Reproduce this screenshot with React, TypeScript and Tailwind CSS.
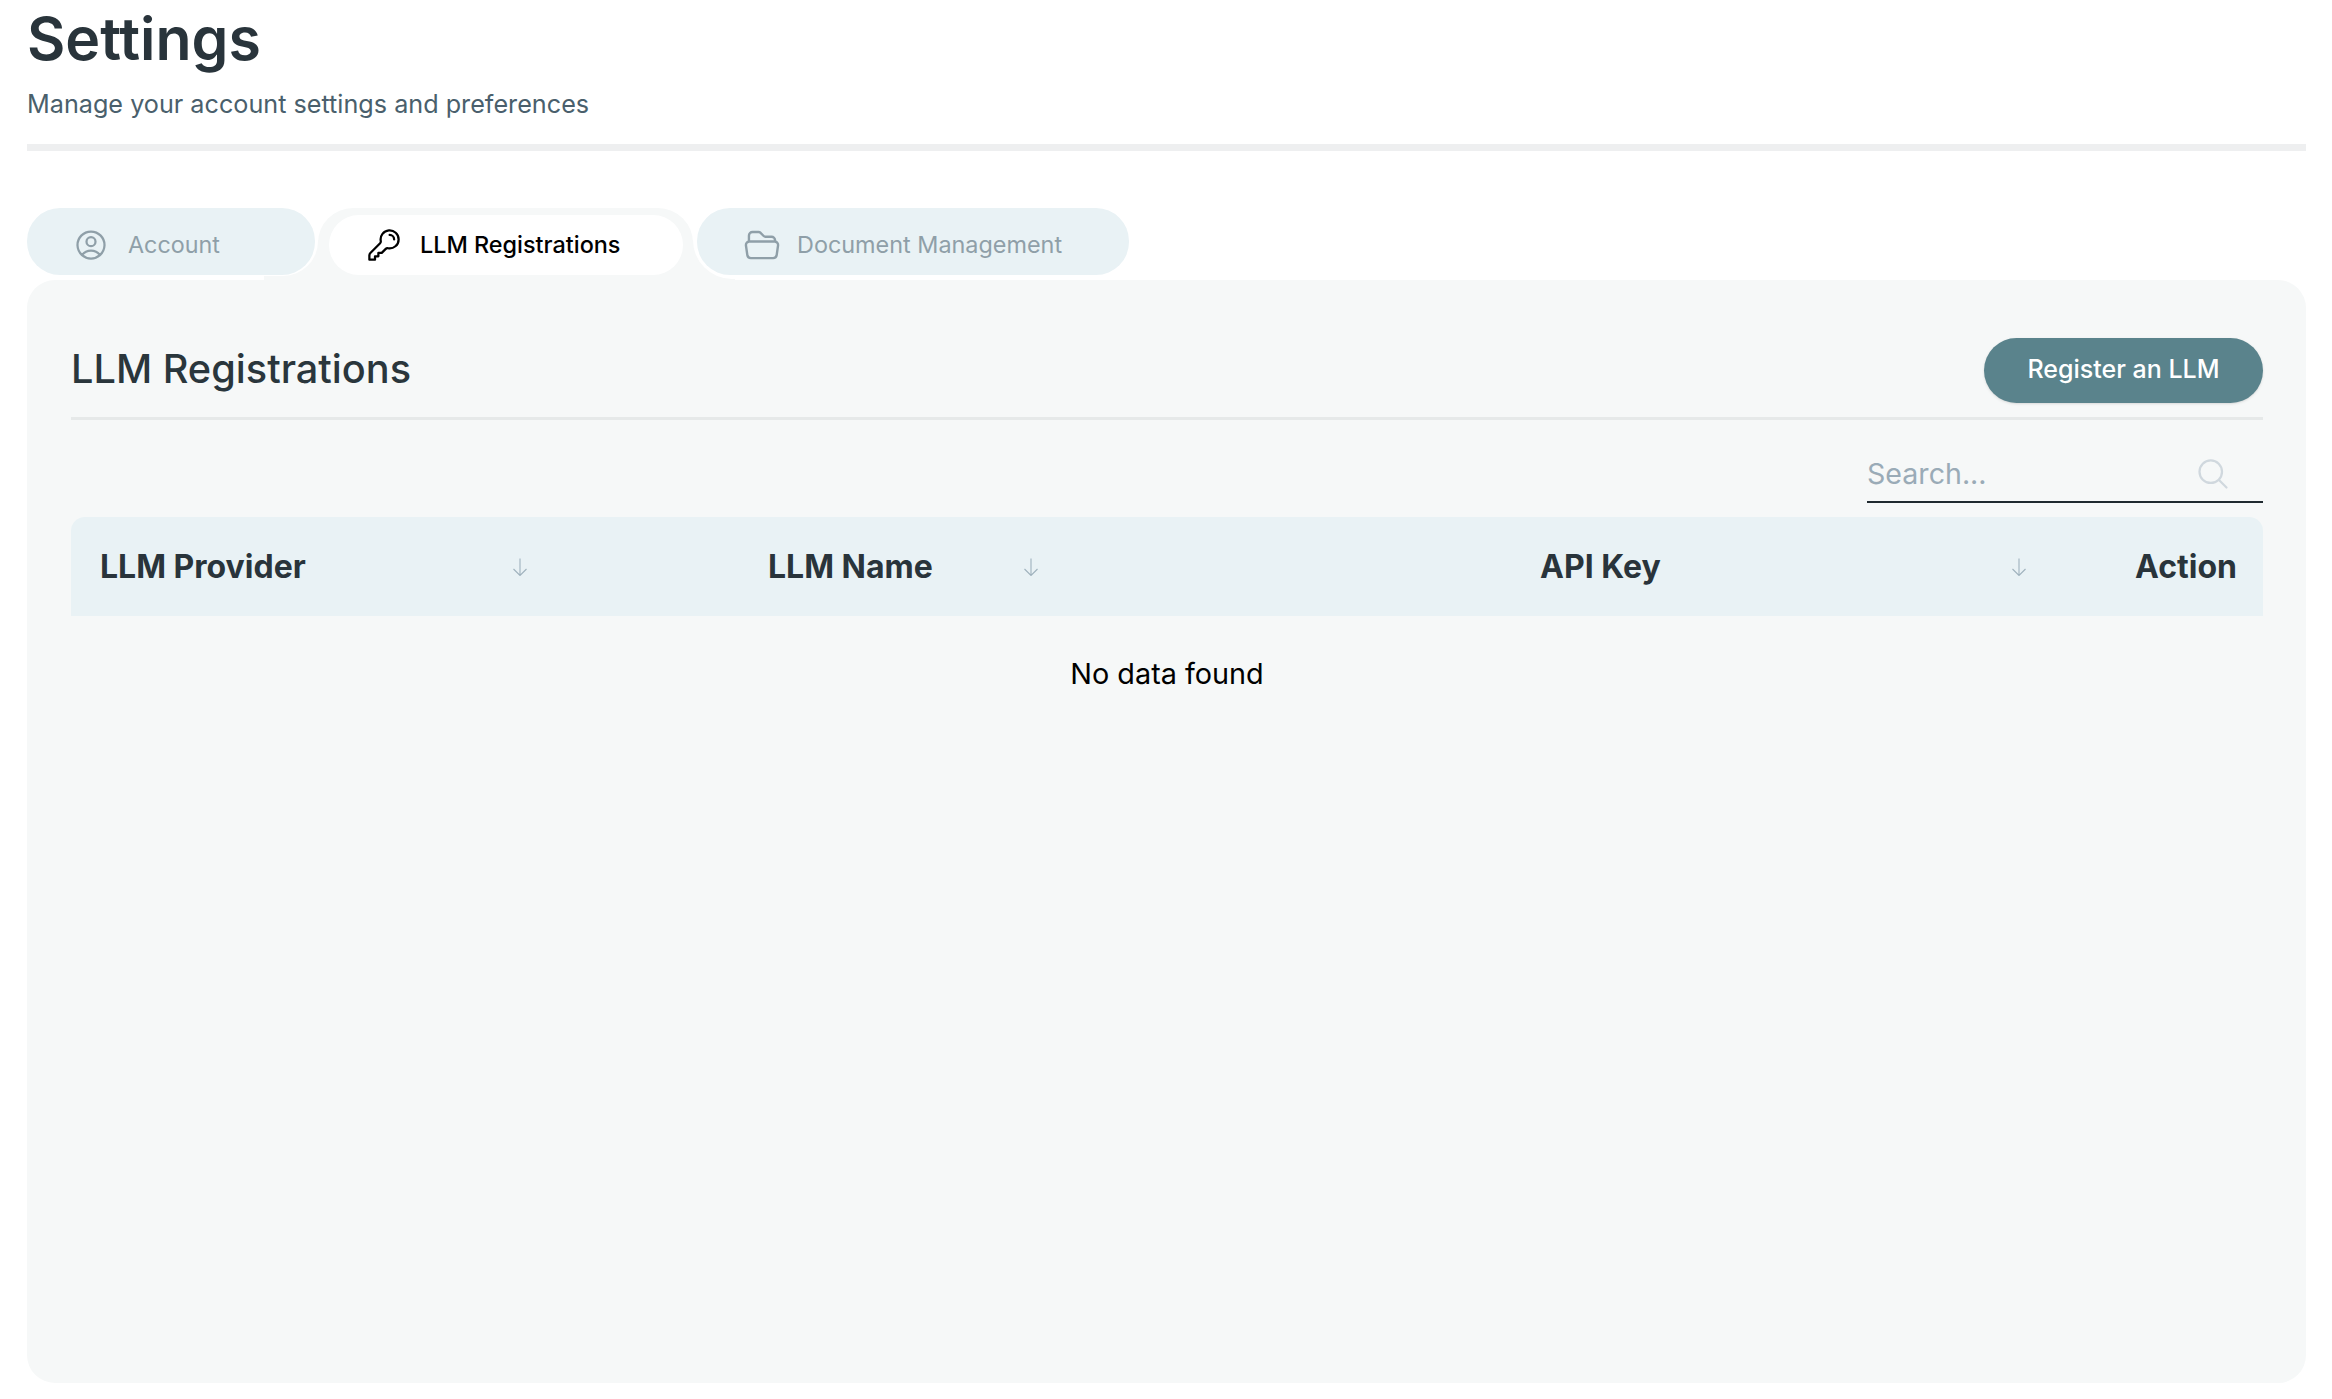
import React from "react";
import {
  HiOutlineUserCircle,
  HiOutlineKey,
  HiOutlineFolderOpen,
  HiOutlineMagnifyingGlass,
} from "react-icons/hi2";

function SortArrow() {
  return (
    <svg width="18" height="18" viewBox="0 0 18 18" fill="none" stroke="#9fb2bd" strokeWidth="1.1" className="shrink-0">
      <path d="M9 0.5V17.5M2.5 11L9 17.5L15.5 11" />
    </svg>
  );
}

export default function App() {
  return (
    <div className="min-h-[1399px] bg-white pl-[27px] pr-[26px] pt-[3px] font-['Inter',sans-serif]">
      <h1 className="text-[59px] leading-[72px] font-semibold text-[#29343b]">Settings</h1>
      <p className="mt-[11px] text-[25.2px] leading-[37px] text-[#4a5f6c]">Manage your account settings and preferences</p>
      <div className="mt-[21px] h-[7px] bg-[#eeeff0]" />

      <div className="mt-[57px] flex h-[72px] items-start">
        <button className="relative z-10 flex h-[67px] w-[288px] items-center rounded-[33px] bg-[#e9f2f5] pl-[46px] pt-[6px] text-[#8f9fa8]">
          <HiOutlineUserCircle className="h-[36px] w-[36px] shrink-0" />
          <span className="ml-[19px] text-[23.3px] leading-[32px]">Account</span>
        </button>

        <div className="relative ml-[3px] h-[72px] w-[375px] rounded-t-[35px] bg-[#f6f8f8] pl-[11px] pr-[10px] pt-[7px]">
          <div className="absolute bottom-0 left-[-54px] h-[40px] w-[55px] bg-[#f6f8f8]">
            <div className="h-[36px] w-[54px] rounded-br-[35px] bg-white" />
          </div>
          <div className="absolute bottom-0 right-[-42px] h-[40px] w-[43px] bg-[#f6f8f8]">
            <div className="ml-[1px] h-[39px] w-[42px] rounded-bl-[40px] bg-white" />
          </div>
          <button className="flex h-[60px] w-full items-center rounded-[30px] bg-white pl-[37px] text-black">
            <HiOutlineKey className="h-[36px] w-[36px] shrink-0" />
            <span className="ml-[18px] text-[23.4px] leading-[32px] font-medium">LLM Registrations</span>
          </button>
        </div>

        <button className="relative z-10 ml-[4px] flex h-[67px] w-[432px] items-center rounded-[33px] bg-[#e9f2f5] pl-[46px] pt-[6px] text-[#8f9fa8]">
          <HiOutlineFolderOpen className="h-[38px] w-[38px] shrink-0" />
          <span className="ml-[16px] text-[23.4px] leading-[32px]">Document Management</span>
        </button>
      </div>

      <div className="h-[1103px] rounded-[28px] bg-[#f6f8f8] pl-[44px] pr-[43px] pt-[58px]">
        <div className="flex h-[65px] items-center justify-between">
          <h2 className="mb-[3px] text-[39.7px] leading-[48px] font-medium text-[#2a363c]">LLM Registrations</h2>
          <button className="h-[65px] w-[279px] rounded-full bg-[#5a838c] pb-[2px] text-[25px] font-medium text-white shadow-sm">
            Register an LLM
          </button>
        </div>
        <div className="mt-[14px] h-[3px] bg-[#e6e9e9]" />

        <div className="mt-[21px] flex justify-end">
          <div className="flex h-[62px] w-[396px] items-center border-b-2 border-[#1f2a30] pt-[5px]">
            <span className="flex-1 text-[28.6px] leading-[40px] text-[#9aabb7]">Search...</span>
            <HiOutlineMagnifyingGlass className="mr-[32px] h-[36px] w-[36px] text-[#d0d8de]" />
          </div>
        </div>

        <div className="mt-[14px] flex h-[99px] items-center rounded-t-[14px] bg-[#e9f2f5] text-[32px] font-bold text-[#29343b]">
          <div className="flex w-[668px] items-center pl-[29px]">
            <span className="w-[411px]">LLM Provider</span>
            <SortArrow />
          </div>
          <div className="flex w-[772px] items-center pl-[29px]">
            <span className="w-[254px]">LLM Name</span>
            <SortArrow />
          </div>
          <div className="flex flex-1 items-center pl-[29px]">
            <span className="w-[470px]">API Key</span>
            <SortArrow />
          </div>
          <span className="pr-[26px]">Action</span>
        </div>

        <p className="mt-[38px] text-center text-[28.8px] leading-[40px] text-black">No data found</p>
      </div>
    </div>
  );
}
